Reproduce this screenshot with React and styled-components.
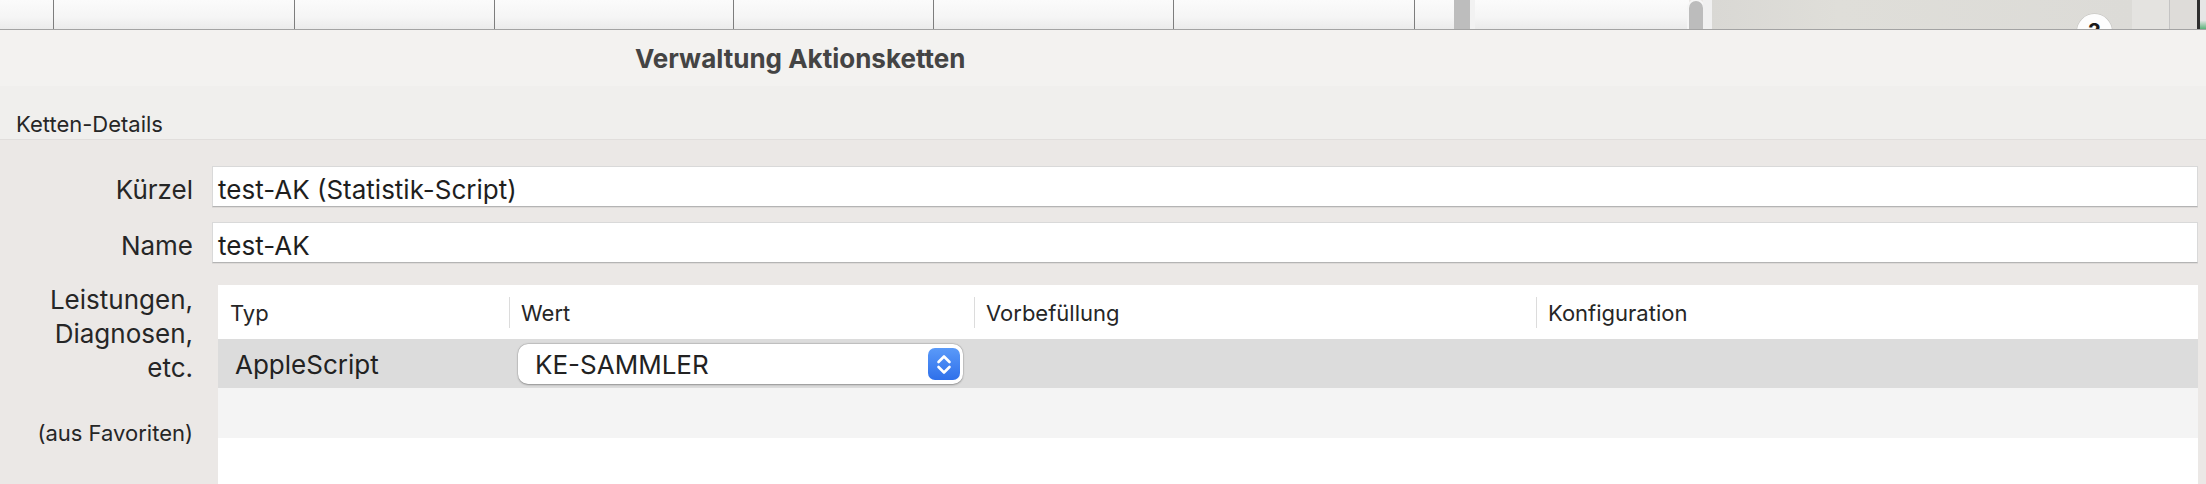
import React from "react";
import styled, { createGlobalStyle } from "styled-components";

const GlobalStyle = createGlobalStyle`
  html, body {
    margin: 0;
    padding: 0;
    background: #ebe8e6;
  }
  body {
    font-family: Inter, "Noto Sans", "Liberation Sans", sans-serif;
    -webkit-font-smoothing: antialiased;
    color: #242424;
  }
`;

const sheetCells = [
  { w: 54, line: true },
  { w: 241, line: true },
  { w: 200, line: true },
  { w: 239, line: true },
  { w: 200, line: true },
  { w: 240, line: true },
  { w: 241, line: true },
  { w: 39 },
  { w: 16, bg: "#bdbdbd" },
  { w: 5, bg: "#f2f2f2" },
  { w: 214 },
];

const columns = [
  { title: "Typ", w: 291 },
  { title: "Wert", w: 465 },
  { title: "Vorbefüllung", w: 562 },
  { title: "Konfiguration", w: 0 },
];

const colTemplate = columns.map((c) => (c.w ? `${c.w}px` : "1fr")).join(" ");

const App = () => {
  return (
    <>
      <GlobalStyle />
      <Window>
        <SheetStrip>
          {sheetCells.map((c, i) => (
            <SheetCell key={i} $w={c.w} $bg={c.bg} $line={c.line} />
          ))}
          <Thumb />
          <SheetCell $w={9} $bg="#f0f0f0" />
          <InspectorArea>
            <HelpButton>?</HelpButton>
          </InspectorArea>
          <SheetCell $w={37} $bg="#e4e3e0" />
          <SheetCell $w={28} $bg="#dedcd9" $lineLeft />
          <DarkEdge />
        </SheetStrip>

        <TitleBar>Verwaltung Aktionsketten</TitleBar>
        <SectionHeader>Ketten-Details</SectionHeader>

        <Content>
          <FormRow>
            <Label>Kürzel</Label>
            <Field>test-AK (Statistik-Script)</Field>
          </FormRow>
          <FormRow $top={15}>
            <Label>Name</Label>
            <Field>test-AK</Field>
          </FormRow>

          <TableRow>
            <SideLabels>
              <MultiLabel>
                Leistungen,
                <br />
                Diagnosen,
                <br />
                etc.
              </MultiLabel>
              <SmallLabel>(aus Favoriten)</SmallLabel>
            </SideLabels>

            <Table>
              <HeaderRow>
                {columns.map((c, i) => (
                  <HeaderCell key={c.title} $sep={i > 0}>
                    {c.title}
                  </HeaderCell>
                ))}
              </HeaderRow>
              <DataRow $bg="#dcdcdc">
                <TypeCell>AppleScript</TypeCell>
                <PopupCell>
                  <Popup>
                    <span>KE-SAMMLER</span>
                    <Stepper>
                      <svg width="32" height="32" viewBox="0 0 32 32">
                        <path
                          d="M10.5 14 L16 8.5 L21.5 14 M10.5 19 L16 24.5 L21.5 19"
                          fill="none"
                          stroke="#fff"
                          strokeWidth="2.6"
                          strokeLinecap="round"
                          strokeLinejoin="round"
                        />
                      </svg>
                    </Stepper>
                  </Popup>
                </PopupCell>
                <div />
                <div />
              </DataRow>
              <DataRow $bg="#f4f4f4" $h={50} />
            </Table>
          </TableRow>
        </Content>
      </Window>
    </>
  );
};

const Window = styled.div`
  width: 2206px;
  height: 484px;
  overflow: hidden;
  display: flex;
  flex-direction: column;
  background: #ebe8e6;
`;

const SheetStrip = styled.div`
  height: 30px;
  flex: none;
  display: flex;
  overflow: hidden;
  box-sizing: border-box;
  border-bottom: 1px solid #a3a3a3;
`;

const SheetCell = styled.div`
  flex: none;
  width: ${(p) => p.$w}px;
  box-sizing: border-box;
  background: ${(p) => p.$bg || "linear-gradient(#fbfbfb, #f5f5f5 60%, #ebebeb)"};
  border-right: ${(p) => (p.$line ? "1px solid #7d7d7d" : "none")};
  border-left: ${(p) => (p.$lineLeft ? "1px solid #c4c4c4" : "none")};
`;

const Thumb = styled.div`
  flex: none;
  width: 14px;
  margin-top: 1px;
  border-radius: 7px 7px 0 0;
  background: #bcbcbc;
  box-shadow: 0 0 0 2px #f6f6f6;
`;

const InspectorArea = styled.div`
  flex: none;
  width: 420px;
  display: flex;
  justify-content: flex-end;
  align-items: flex-start;
  padding: 14px 20px 0 0;
  box-sizing: border-box;
  background: linear-gradient(90deg, #d9d8d4, #dfded9 30%, #dcdbd7);
`;

const HelpButton = styled.div`
  width: 35px;
  height: 35px;
  flex: none;
  border-radius: 50%;
  background: #fdfdfd;
  box-shadow: 0 0 0 0.5px rgba(0, 0, 0, 0.12);
  text-align: center;
  font-weight: 700;
  font-size: 22px;
  line-height: 35px;
  color: #1a1a1a;
`;

const DarkEdge = styled.div`
  flex: none;
  width: 9px;
  border-left: 3px solid #2e2e2e;
  background: linear-gradient(#e6e6e6 70%, #5bb37a);
`;

const TitleBar = styled.div`
  height: 56px;
  flex: none;
  display: flex;
  align-items: center;
  padding-left: 635px;
  padding-top: 1px;
  box-sizing: border-box;
  background: #f3f2f0;
  font-size: 26px;
  font-weight: 700;
  color: #444;
`;

const SectionHeader = styled.div`
  height: 54px;
  flex: none;
  box-sizing: border-box;
  display: flex;
  align-items: flex-end;
  padding: 0 0 4px 16px;
  background: #f0efed;
  border-bottom: 1px solid #e1dedc;
  font-size: 22px;
  line-height: 22px;
  color: #262626;
`;

const Content = styled.div`
  flex: 1;
  display: flex;
  flex-direction: column;
  padding: 26px 8px 0 0;
  background: #ebe8e6;
`;

const FormRow = styled.div`
  display: grid;
  grid-template-columns: 193px 1fr;
  column-gap: 19px;
  align-items: baseline;
  margin-top: ${(p) => p.$top || 0}px;
`;

const Label = styled.div`
  text-align: right;
  font-size: 26px;
  color: #262626;
`;

const Field = styled.div`
  height: 41px;
  box-sizing: border-box;
  display: flex;
  align-items: center;
  padding: 6px 0 0 5px;
  background: #fff;
  border: 1px solid #d9d9d9;
  border-bottom-color: #b4b4b4;
  box-shadow: 0 1px 0 rgba(0, 0, 0, 0.06);
  font-size: 26px;
  color: #1e1e1e;
`;

const TableRow = styled.div`
  flex: 1;
  display: grid;
  grid-template-columns: 193px 1fr;
  column-gap: 25px;
  margin-top: 22px;
`;

const SideLabels = styled.div`
  display: flex;
  flex-direction: column;
  align-items: flex-end;
  margin-top: -2px;
`;

const MultiLabel = styled.div`
  text-align: right;
  font-size: 26px;
  line-height: 34px;
  color: #262626;
`;

const SmallLabel = styled.div`
  margin-top: 35px;
  font-size: 22px;
  line-height: 27px;
  color: #262626;
`;

const Table = styled.div`
  background: #fff;
  display: flex;
  flex-direction: column;
`;

const HeaderRow = styled.div`
  height: 54px;
  flex: none;
  display: grid;
  grid-template-columns: ${colTemplate};
  align-items: center;
`;

const HeaderCell = styled.div`
  height: 31px;
  box-sizing: border-box;
  padding: 2px 0 0 11px;
  border-left: ${(p) => (p.$sep ? "1px solid #dcdcdc" : "1px solid transparent")};
  font-size: 22px;
  line-height: 29px;
  color: #262626;
  white-space: nowrap;
`;

const DataRow = styled.div`
  height: ${(p) => p.$h || 49}px;
  flex: none;
  display: grid;
  grid-template-columns: ${colTemplate};
  align-items: center;
  background: ${(p) => p.$bg};
`;

const TypeCell = styled.div`
  padding: 2px 0 0 17px;
  font-size: 26px;
  color: #222;
`;

const PopupCell = styled.div`
  padding: 0 11px 0 9px;
`;

const Popup = styled.div`
  height: 40px;
  box-sizing: border-box;
  display: flex;
  align-items: center;
  justify-content: space-between;
  padding: 0 3px 0 17px;
  border-radius: 10px;
  background: #fff;
  box-shadow: 0 0.5px 2px rgba(0, 0, 0, 0.3), 0 0 0 0.5px rgba(0, 0, 0, 0.1);
  font-size: 26px;
  color: #222;
  span {
    padding-top: 2px;
  }
`;

const Stepper = styled.div`
  width: 32px;
  height: 32px;
  flex: none;
  border-radius: 7px;
  background: linear-gradient(#5a9af9, #2f70ea);
  svg {
    display: block;
  }
`;

export default App;
